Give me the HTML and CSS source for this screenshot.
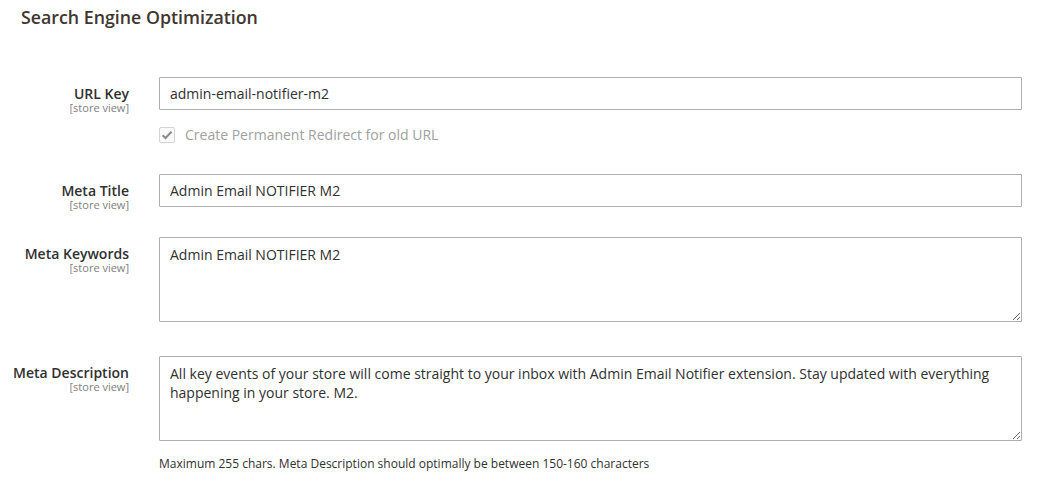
FILE: index.html
```html
<!DOCTYPE html>
<html lang="en">
<head>
<meta charset="utf-8">
<title>Search Engine Optimization</title>
<link rel="stylesheet" href="styles.css">
</head>
<body>
<section class="fieldset">
  <h2 class="title">Search Engine Optimization</h2>

  <div class="field row-url">
    <label class="label"><span class="name">URL Key</span><span class="scope">[store view]</span></label>
    <div class="control">
      <input class="input" type="text" value="admin-email-notifier-m2">
      <div class="redirect">
        <span class="checkbox"><svg width="12" height="10" viewBox="0 0 12 10"><path d="M1.5 5.2 L4.5 8 L10.5 1.8" fill="none" stroke="#8a8a8a" stroke-width="2"/></svg></span>
        <span class="redirect-text">Create Permanent Redirect for old URL</span>
      </div>
    </div>
  </div>

  <div class="field row-title">
    <label class="label"><span class="name">Meta Title</span><span class="scope">[store view]</span></label>
    <div class="control">
      <input class="input" type="text" value="Admin Email NOTIFIER M2">
    </div>
  </div>

  <div class="field row-keywords">
    <label class="label"><span class="name">Meta Keywords</span><span class="scope">[store view]</span></label>
    <div class="control">
      <textarea class="textarea">Admin Email NOTIFIER M2</textarea>
    </div>
  </div>

  <div class="field row-desc">
    <label class="label"><span class="name">Meta Description</span><span class="scope">[store view]</span></label>
    <div class="control">
      <textarea class="textarea">All key events of your store will come straight to your inbox with Admin Email Notifier extension. Stay updated with everything happening in your store. M2.</textarea>
      <div class="note">Maximum 255 chars. Meta Description should optimally be between 150-160 characters</div>
    </div>
  </div>
</section>
</body>
</html>
```

FILE: styles.css
```css
html, body {
  margin: 0;
  padding: 0;
  background: #ffffff;
}
body {
  font-family: "Open Sans", "Noto Sans", sans-serif;
  color: #303030;
  font-size: 14px;
  line-height: 1.36;
}
.fieldset {
  padding: 0 19px 0 0;
}
.title {
  margin: 0;
  padding: 5px 0 0 21px;
  font-size: 17.8px;
  font-weight: 600;
  line-height: 24px;
  color: #41362f;
}
.field {
  display: grid;
  grid-template-columns: 129px 1fr;
  column-gap: 30px;
  align-items: start;
}
.row-url { margin-top: 48px; }
.row-title { margin-top: 31px; }
.row-keywords { margin-top: 30px; }
.row-desc { margin-top: 34px; }
.label {
  display: flex;
  flex-direction: column;
  align-items: flex-end;
  text-align: right;
  padding-top: 9px;
  margin-bottom: -6px;
}
.name {
  font-weight: 600;
  font-size: 14px;
  line-height: 16px;
  color: #303030;
}
.scope {
  font-size: 11px;
  line-height: 11px;
  margin-top: 0;
  color: #808080;
}
.control {
  display: flex;
  flex-direction: column;
}
.input, .textarea {
  box-sizing: border-box;
  width: 100%;
  margin: 0;
  border: 1px solid #adadad;
  border-radius: 1px;
  background: #ffffff;
  font-family: "Open Sans", "Noto Sans", sans-serif;
  font-size: 14px;
  line-height: 19px;
  color: #303030;
  outline: none;
}
.input {
  height: 33px;
  padding: 6px 10px;
}
.textarea {
  display: block;
  height: 85px;
  padding: 7px 10px;
  resize: vertical;
}
.redirect {
  display: flex;
  align-items: center;
  margin-top: 17px;
  height: 16px;
}
.checkbox {
  box-sizing: border-box;
  width: 16px;
  height: 16px;
  border: 1px solid #d4d4d4;
  border-radius: 2px;
  background: #fafafa;
  display: flex;
  align-items: center;
  justify-content: center;
}
.redirect-text {
  margin-left: 10px;
  font-size: 14px;
  color: #a0a0a0;
}
.note {
  margin-top: 15px;
  font-size: 12px;
  line-height: 16px;
  color: #303030;
}
```
